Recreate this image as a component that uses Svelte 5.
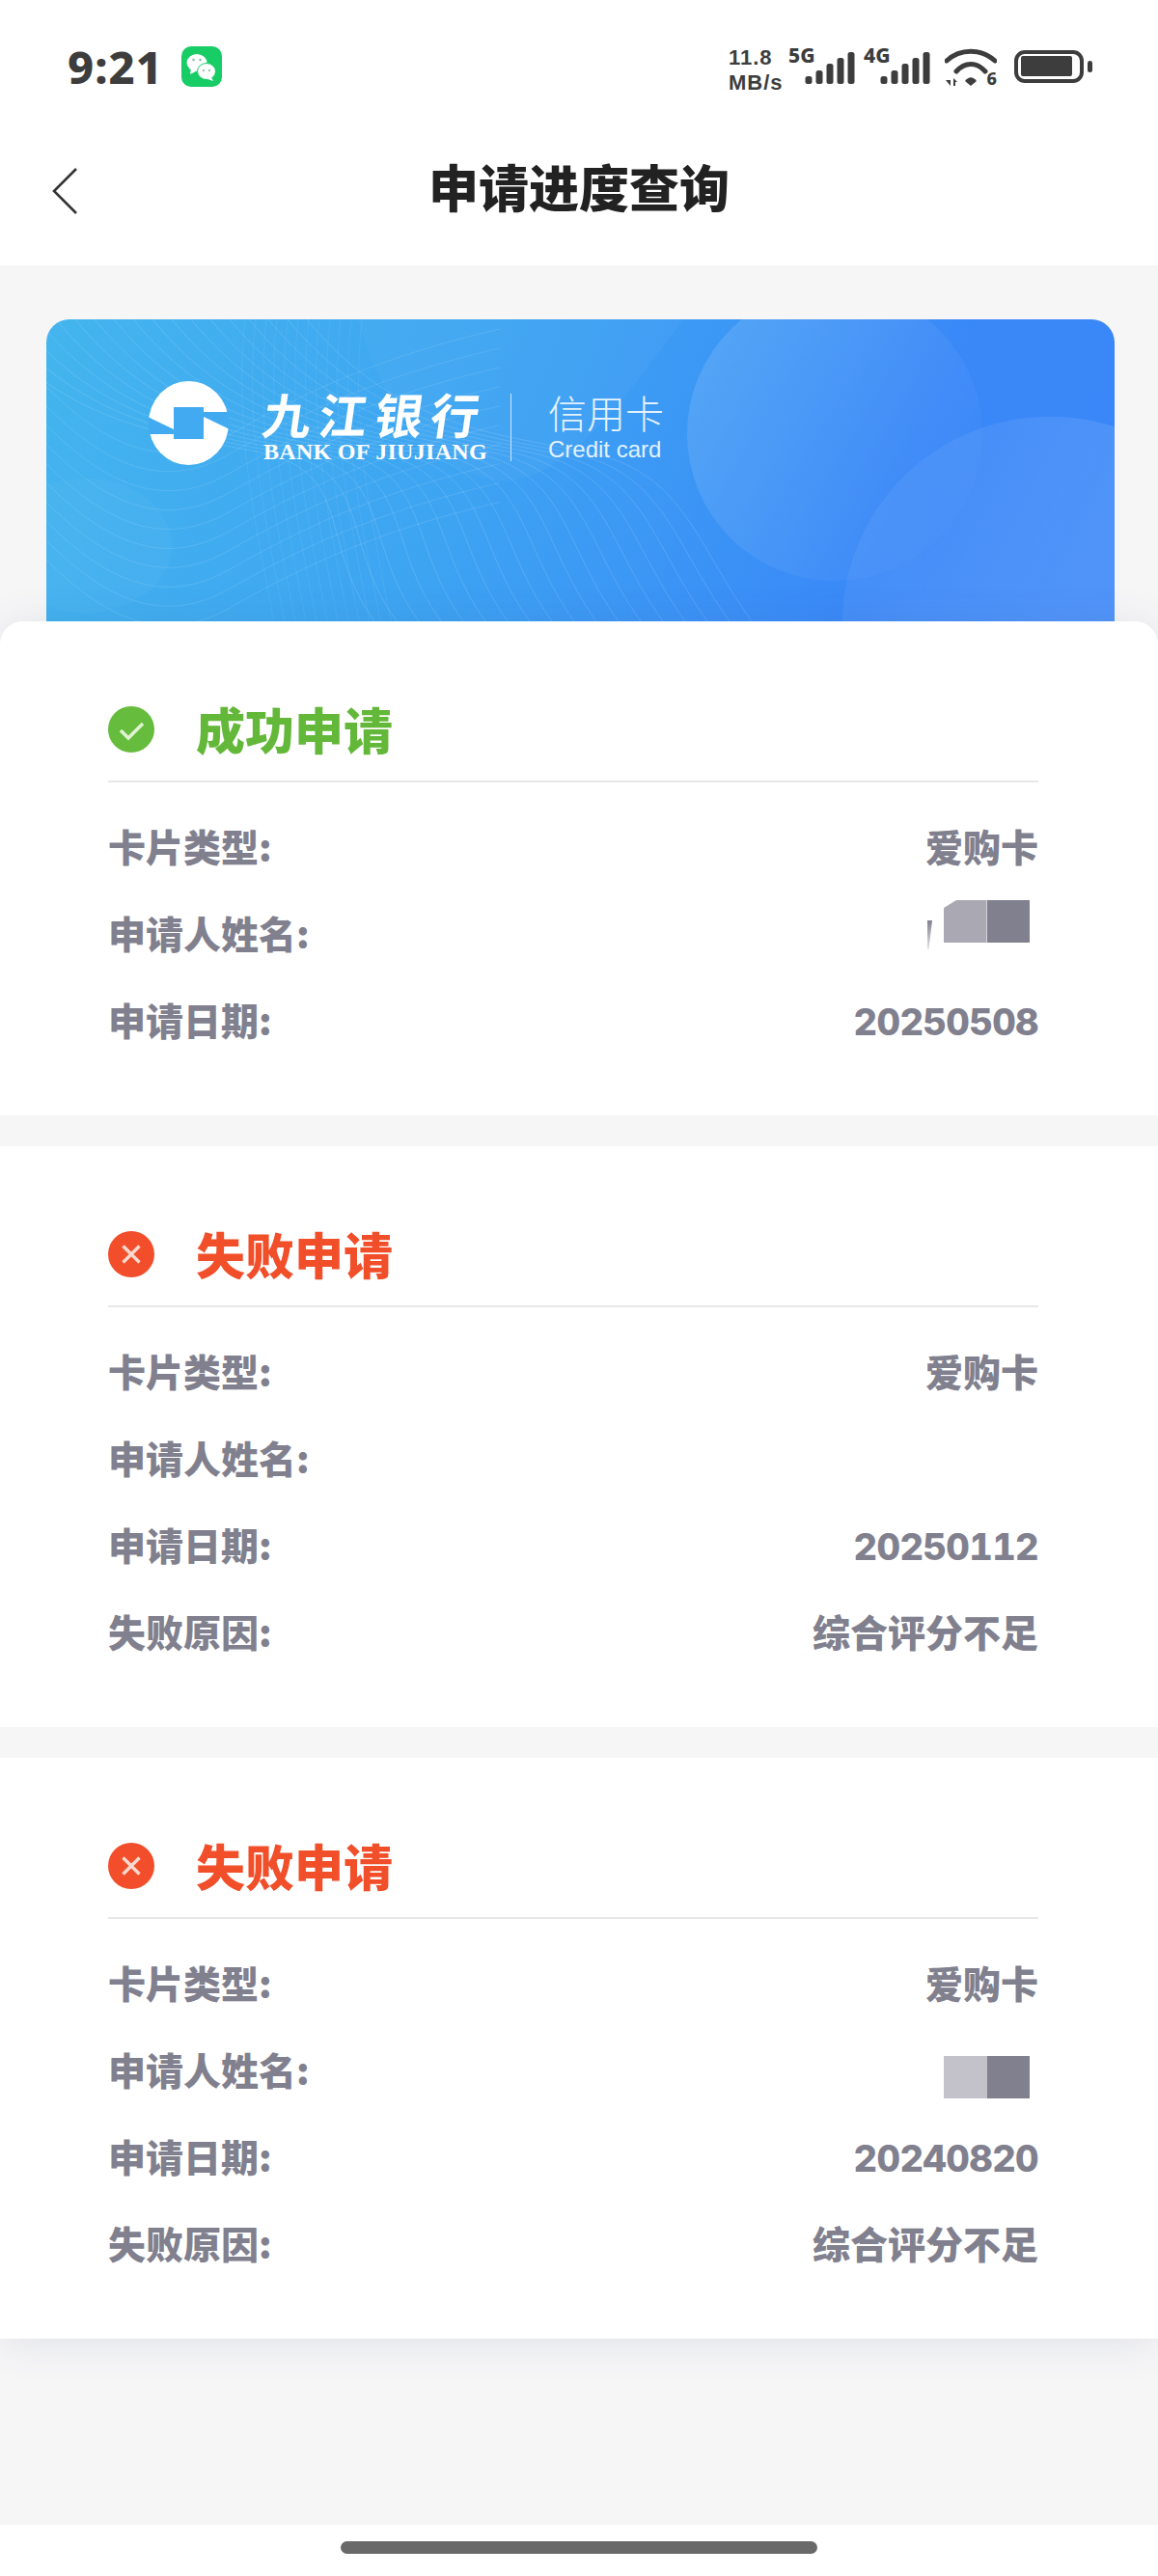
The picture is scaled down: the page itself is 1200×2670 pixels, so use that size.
<script>
  const records = [
    {
      ok: true,
      rows: [
        { label: '卡片类型:', value: '爱购卡' },
        { label: '申请人姓名:', blur: 'mid', sliver: true },
        { label: '申请日期:', value: '20250508', num: true }
      ]
    },
    {
      ok: false,
      rows: [
        { label: '卡片类型:', value: '爱购卡' },
        { label: '申请人姓名:' },
        { label: '申请日期:', value: '20250112', num: true },
        { label: '失败原因:', value: '综合评分不足' }
      ]
    },
    {
      ok: false,
      rows: [
        { label: '卡片类型:', value: '爱购卡' },
        { label: '申请人姓名:', blur: 'pale' },
        { label: '申请日期:', value: '20240820', num: true },
        { label: '失败原因:', value: '综合评分不足' }
      ]
    }
  ];

  const fan = Array.from({ length: 18 }, (_, i) => {
    const x0 = -70 + i * 20;
    const x1 = 340 + i * 23;
    return `M${x0} 0C${x0 + 90} 110 ${x0 + 190} 118 ${x0 + 290} 138S${x1 - 60} 230 ${x1} 314`;
  });
  const waves = Array.from({ length: 10 }, (_, i) => {
    const y = 70 + i * 20;
    return `M0 ${y}C60 ${y + 60} 120 ${y + 90} 190 ${y + 50}S340 ${y - 30} 470 ${y - 60}`;
  });
  const mesh = Array.from({ length: 12 }, (_, i) => {
    const x = 206 + i * 11;
    return `M${x} 0C${x - 12} 110 ${x + 10} 210 ${x + 30} 314`;
  });
  const signal = [
    { x: 0, h: 8 },
    { x: 11, h: 14 },
    { x: 22, h: 21 },
    { x: 33, h: 27 },
    { x: 44, h: 33 }
  ];
</script>

<div class="page">
  <header class="top">
    <div class="status">
      <div class="status-left">
        <span class="time">9:21</span>
        <svg class="wechat" viewBox="0 0 42 42" aria-hidden="true">
          <rect width="42" height="42" rx="10" fill="#18cc66" />
          <ellipse cx="16" cy="17" rx="10.5" ry="9" fill="#fff" />
          <path d="M10 23l-1 6 6-3z" fill="#fff" />
          <ellipse cx="26" cy="26" rx="9.5" ry="8.5" fill="#fff" stroke="#18cc66" stroke-width="1" />
          <path d="M31 32l2 4-6-2z" fill="#fff" />
          <circle cx="12.5" cy="14" r="1.2" fill="#7fb99a" />
          <circle cx="19.5" cy="14" r="1.2" fill="#7fb99a" />
          <circle cx="23" cy="25" r="1.1" fill="#7fb99a" />
          <circle cx="29" cy="25" r="1.1" fill="#7fb99a" />
        </svg>
      </div>
      <div class="status-right">
        <div class="speed"><span>11.8</span><span>MB/s</span></div>
        <div class="net">
          <span class="net-label">5G</span>
          <svg class="bars" viewBox="0 0 51 34" aria-hidden="true">
            {#each signal as bar}
              <rect x={bar.x} y={34 - bar.h} width="7" height={bar.h} rx="2.5" fill="#3d3d3d" />
            {/each}
          </svg>
        </div>
        <div class="net net-second">
          <span class="net-label">4G</span>
          <svg class="bars" viewBox="0 0 51 34" aria-hidden="true">
            {#each signal as bar}
              <rect x={bar.x} y={34 - bar.h} width="7" height={bar.h} rx="2.5" fill="#3d3d3d" />
            {/each}
          </svg>
        </div>
        <div class="wifi">
          <svg viewBox="0 0 54 40" aria-hidden="true">
            <path d="M2 13C16 0 38 0 52 13" fill="none" stroke="#3d3d3d" stroke-width="5" stroke-linecap="round" />
            <path d="M12 24C21 14 33 14 42 24" fill="none" stroke="#3d3d3d" stroke-width="5" stroke-linecap="round" />
            <path d="M21 34C25 29 29 29 33 34L27 39z" fill="#3d3d3d" />
            <path d="M1 33h5v6zM9 39v-8l4 4h-2v4z" fill="#3d3d3d" />
          </svg>
          <span class="wifi-num">6</span>
        </div>
        <svg class="battery" viewBox="0 0 81 34" aria-hidden="true">
          <rect x="2" y="2" width="68" height="30" rx="9" fill="none" stroke="#3d3d3d" stroke-width="4" />
          <rect x="7" y="6" width="53" height="21" rx="2" fill="#3d3d3d" />
          <rect x="76" y="11" width="5" height="12" rx="2.5" fill="#3d3d3d" />
        </svg>
      </div>
    </div>
    <nav class="nav">
      <svg class="back" viewBox="0 0 28 50" aria-hidden="true">
        <path d="M26 2L3 25l23 23" fill="none" stroke="#333" stroke-width="2.6" />
      </svg>
      <h1>申请进度查询</h1>
    </nav>
  </header>

  <main class="main">
    <section class="banner">
      <svg class="banner-art" viewBox="0 0 1107 314" preserveAspectRatio="none" aria-hidden="true">
        <defs>
          <linearGradient id="glow" x1="0" y1="0" x2="1" y2="0.6">
            <stop offset="0" stop-color="#fff" stop-opacity="0.14" />
            <stop offset="1" stop-color="#fff" stop-opacity="0.01" />
          </linearGradient>
          <linearGradient id="glow2" x1="0" y1="0" x2="1" y2="0.5">
            <stop offset="0" stop-color="#fff" stop-opacity="0.03" />
            <stop offset="0.6" stop-color="#fff" stop-opacity="0.11" />
            <stop offset="1" stop-color="#fff" stop-opacity="0.12" />
          </linearGradient>
        </defs>
        <path d="M323 0C340 60 370 120 420 150C500 200 560 140 660 0z" fill="#fff" opacity="0.03" />
        <ellipse cx="40" cy="235" rx="90" ry="70" fill="#fff" opacity="0.03" />
        <circle cx="817" cy="119" r="153" fill="url(#glow)" />
        <circle cx="1040" cy="316" r="215" fill="url(#glow2)" />
        {#each fan as d}
          <path {d} fill="none" stroke="#fff" stroke-width="1" opacity="0.14" />
        {/each}
        {#each waves as d}
          <path {d} fill="none" stroke="#fff" stroke-width="1" opacity="0.12" />
        {/each}
        {#each mesh as d}
          <path {d} fill="none" stroke="#fff" stroke-width="1" opacity="0.07" />
        {/each}
      </svg>
      <div class="brand">
        <svg class="mark" viewBox="0 0 83 87" aria-hidden="true">
          <ellipse cx="41.5" cy="43.5" rx="41.5" ry="43.5" fill="#fff" />
          <rect x="26" y="27" width="31" height="33" fill="#41aaf0" />
          <path d="M-1 37L26 50V55H-1z" fill="#41aaf0" />
          <path d="M84 50L57 37V32H84z" fill="#41aaf0" />
        </svg>
        <div class="bank">
          <strong>九江银行</strong>
          <span>BANK OF JIUJIANG</span>
        </div>
        <i class="brand-line"></i>
        <div class="product">
          <strong>信用卡</strong>
          <span>Credit card</span>
        </div>
      </div>
    </section>

    <div class="records">
      {#each records as record}
        <article class="card">
          <div class="head" class:fail={!record.ok}>
            <svg class="state" viewBox="0 0 48 48" aria-hidden="true">
              <circle cx="24" cy="24" r="24" fill={record.ok ? '#66bc3c' : '#f24e2b'} />
              {#if record.ok}
                <path d="M13 25l8 8 15-15" fill="none" stroke="#dff3d3" stroke-width="3.6" />
              {:else}
                <path d="M15.5 15.5l17 17M32.5 15.5l-17 17" fill="none" stroke="#fcd9cf" stroke-width="3.4" />
              {/if}
            </svg>
            <h2>{record.ok ? '成功申请' : '失败申请'}</h2>
          </div>
          <div class="rows">
            {#each record.rows as row}
              <div class="row">
                <span class="cell">{row.label}</span>
                {#if row.value}
                  <span class:cell={!row.num} class:num={row.num}>{row.value}</span>
                {:else if row.blur}
                  <div class="mosaic" class:pale={row.blur === 'pale'}>
                    {#if row.sliver}<i class="sliver"></i>{/if}
                    <i class="cell-a"></i>
                    <i class="cell-b"></i>
                  </div>
                {/if}
              </div>
            {/each}
          </div>
        </article>
      {/each}
    </div>
  </main>

  <div class="home"><i></i></div>
</div>

<style>
  :global(body) {
    background: #fff;
  }

  .page {
    width: 1200px;
    font-family: "Noto Sans CJK SC", sans-serif;
  }

  .top {
    height: 275px;
    background: #fff;
  }

  .status {
    height: 156px;
    box-sizing: border-box;
    padding: 47px 68px 0 70px;
    display: flex;
    justify-content: space-between;
    align-items: flex-start;
    color: #3d3d3d;
  }

  .status-left {
    display: flex;
    align-items: center;
    gap: 19px;
  }

  .time {
    font-family: "Noto Sans", sans-serif;
    font-size: 47px;
    line-height: 44px;
    font-weight: 800;
    letter-spacing: 1px;
  }

  .wechat {
    width: 42px;
    height: 42px;
  }

  .status-right {
    display: flex;
    align-items: flex-start;
  }

  .speed {
    width: 62px;
    display: flex;
    flex-direction: column;
    font-family: "Liberation Sans", sans-serif;
    font-size: 22px;
    line-height: 25.5px;
    font-weight: 700;
    letter-spacing: 1px;
  }

  .net {
    position: relative;
    width: 52px;
    height: 40px;
    margin-left: 17px;
    padding-top: 6px;
  }

  .net-second {
    margin-left: 26px;
  }

  .net-label {
    position: absolute;
    left: -17px;
    top: 0;
    font-family: "Noto Sans", sans-serif;
    font-size: 21px;
    line-height: 20px;
    font-weight: 800;
  }

  .bars {
    display: block;
    width: 52px;
    height: 34px;
  }

  .wifi {
    position: relative;
    width: 54px;
    height: 40px;
    margin-left: 15px;
    margin-top: 3px;
  }

  .wifi svg {
    display: block;
    width: 54px;
    height: 40px;
  }

  .wifi-num {
    position: absolute;
    right: 0;
    bottom: 0;
    font-family: "Noto Sans", sans-serif;
    font-size: 18px;
    line-height: 18px;
    font-weight: 800;
  }

  .battery {
    width: 81px;
    height: 34px;
    margin-left: 18px;
    margin-top: 5px;
  }

  .nav {
    position: relative;
    height: 74px;
    display: flex;
    align-items: center;
    justify-content: center;
  }

  .back {
    position: absolute;
    left: 53px;
    top: 17px;
    width: 28px;
    height: 50px;
  }

  h1 {
    margin: 0;
    font-family: "Noto Sans CJK SC", sans-serif;
    font-size: 52px;
    line-height: 60px;
    font-weight: 900;
    color: #222;
  }

  .main {
    background: #f6f6f7;
    padding: 56px 0 193px;
  }

  .banner {
    position: relative;
    height: 313px;
    margin: 0 45px 0 48px;
    overflow: hidden;
    border-radius: 24px 24px 0 0;
    background: linear-gradient(112deg, #44b5ee 0%, #3da4f2 40%, #3a88f8 78%, #3a86f8 100%);
  }

  .banner-art {
    position: absolute;
    inset: 0;
    width: 100%;
    height: 100%;
  }

  .brand {
    position: relative;
    display: flex;
    padding: 64px 0 0 106px;
    color: #fff;
  }

  .mark {
    width: 83px;
    height: 87px;
    overflow: hidden;
  }

  .bank {
    width: 232px;
    margin-left: 36px;
    display: flex;
    flex-direction: column;
  }

  .bank strong {
    font-family: "Noto Sans CJK SC", sans-serif;
    font-size: 50px;
    line-height: 56px;
    font-weight: 700;
    letter-spacing: 8px;
    white-space: nowrap;
    transform: skewX(-8deg);
    margin-top: 5px;
  }

  .bank span {
    font-family: "Liberation Serif", serif;
    font-size: 24px;
    line-height: 20px;
    font-weight: 700;
    letter-spacing: 0.3px;
    white-space: nowrap;
    margin-top: 2px;
  }

  .brand-line {
    width: 1px;
    height: 70px;
    margin: 13px 0 0 24px;
    background: #cde6fb;
  }

  .product {
    width: 120px;
    margin-left: 38px;
    display: flex;
    flex-direction: column;
    color: #e3f2fd;
  }

  .product strong {
    font-family: "Noto Sans CJK SC", sans-serif;
    font-size: 40px;
    line-height: 46px;
    font-weight: 300;
    margin-top: 9px;
    white-space: nowrap;
  }

  .product span {
    font-family: "Liberation Sans", sans-serif;
    font-size: 24px;
    line-height: 26px;
    margin-top: 3px;
    white-space: nowrap;
  }

  .records {
    position: relative;
    display: flex;
    flex-direction: column;
    gap: 32px;
    background: #f6f6f7;
    border-radius: 24px 24px 0 0;
    box-shadow: 0 4px 44px rgba(70, 80, 120, 0.12);
  }

  .card {
    padding: 0 124px 52px 112px;
    background: #fff;
  }

  .card:first-child {
    border-radius: 24px 24px 0 0;
  }

  .head {
    height: 79px;
    padding-top: 86px;
    display: flex;
    align-items: flex-start;
    border-bottom: 2px solid #e8e8ea;
    color: #63b83a;
  }

  .head.fail {
    color: #f14e2a;
  }

  .state {
    width: 48px;
    height: 48px;
    margin: 2px 43px 0 0;
    flex: none;
  }

  h2 {
    margin: 0;
    font-family: "Noto Sans CJK SC", sans-serif;
    font-size: 51px;
    line-height: 50px;
    font-weight: 900;
  }

  .rows {
    padding-top: 23px;
  }

  .row {
    height: 90px;
    display: flex;
    justify-content: space-between;
    align-items: center;
    font-size: 39px;
    font-weight: 900;
    color: #81808e;
  }

  .cell {
    margin-top: -6px;
  }

  .num {
    font-family: Inter, sans-serif;
    font-size: 38px;
    font-weight: 800;
    letter-spacing: -0.6px;
    font-feature-settings: "tnum";
  }

  .mosaic {
    position: relative;
    display: flex;
    margin-right: 9px;
    margin-top: -28px;
  }

  .mosaic.pale {
    margin-top: 12px;
  }

  .mosaic i {
    display: block;
    width: 44.5px;
    height: 44px;
  }

  .mosaic .cell-a {
    background: #a9a8b3;
    clip-path: polygon(0 8px, 13px 0, 100% 0, 100% 100%, 0 100%);
  }

  .mosaic.pale .cell-a {
    background: #c3c2cb;
    clip-path: none;
  }

  .mosaic .cell-b {
    background: #81808e;
  }

  .mosaic .sliver {
    position: absolute;
    left: -17px;
    top: 21px;
    width: 5px;
    height: 30px;
    background: linear-gradient(#81808e, #e4e4e8);
    clip-path: polygon(0 0, 100% 0, 30% 100%, 0 100%);
  }

  .home {
    height: 53px;
    box-sizing: border-box;
    padding-top: 17px;
    display: flex;
    justify-content: center;
    background: #fff;
  }

  .home i {
    display: block;
    width: 494px;
    height: 13px;
    border-radius: 7px;
    background: #696969;
  }
</style>
